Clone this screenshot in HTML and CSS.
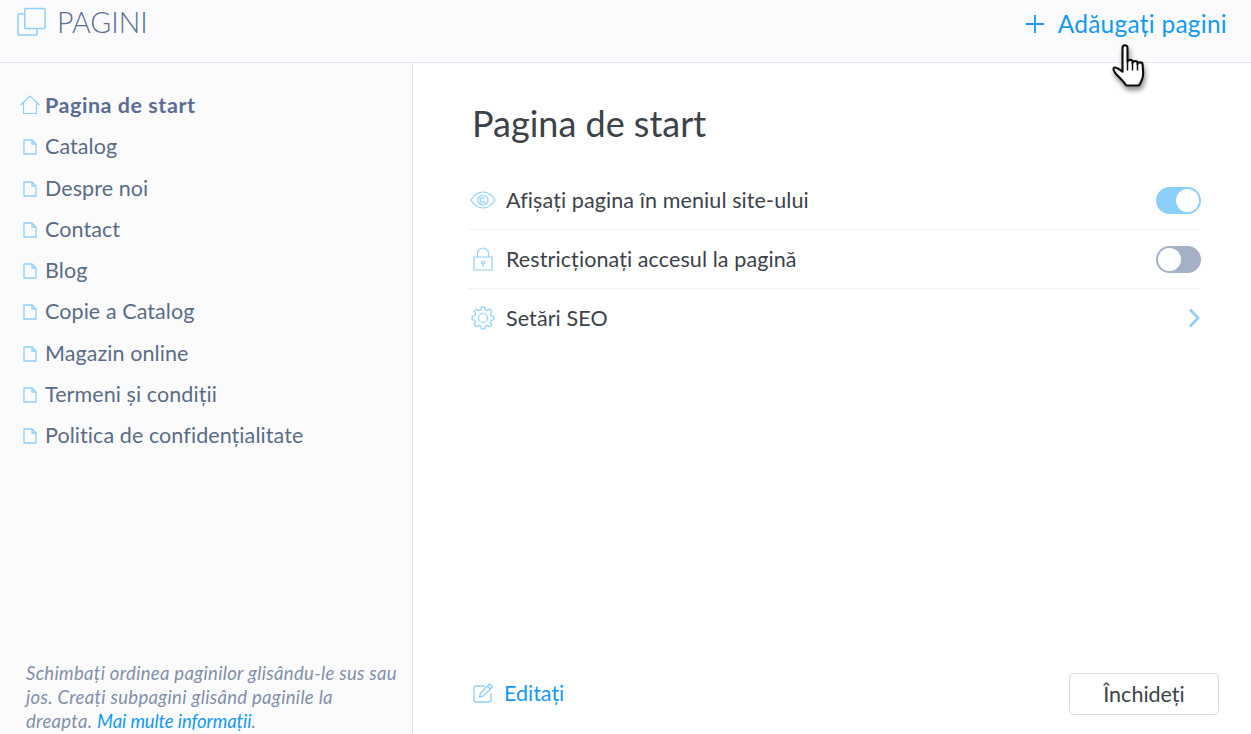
FILE: index.html
```html
<!DOCTYPE html>
<html lang="ro">
<head>
<meta charset="utf-8">
<title>Pagini</title>
<link rel="stylesheet" href="styles.css">
</head>
<body>
<div class="app">
  <header class="topbar">
    <div class="brand">
      <svg class="brand-icon" width="30" height="30" viewBox="0 0 30 30" fill="none" stroke="#8fd0fb" stroke-width="1.500"><rect x="7.700" y="1.500" width="20.300" height="20" rx="1"/><path d="M7.700 7H2a1 1 0 0 0-1 1v19a1 1 0 0 0 1 1h17a1 1 0 0 0 1-1v-5.500"/></svg>
      <span class="brand-title">PAGINI</span>
    </div>
    <a class="add-link">
      <svg width="20" height="20" viewBox="0 0 20 20" stroke="#1399f5" stroke-width="1.800" fill="none"><path d="M10 1v18M1 10h18"/></svg>
      <span>Adăugați pagini</span>
    </a>
  </header>
  <div class="body">
    <aside class="sidebar">
      <ul class="page-list">
        <li class="page-item active"><svg class="pg-icon" width="20" height="20" viewBox="0 0 20 20" fill="none" stroke="#8fd0fb" stroke-width="1.200"><path d="M.5 10 10 1l9.500 9M3.500 8v10.500h13V8"/></svg><span>Pagina de start</span></li>
        <li class="page-item"><svg class="pg-icon doc" width="14" height="16" viewBox="0 0 14 16" fill="none" stroke="#8fd0fb" stroke-width="1.300"><path d="M1 1h8l4 4v10H1zM9 1v4h4"/></svg><span>Catalog</span></li>
        <li class="page-item"><svg class="pg-icon doc" width="14" height="16" viewBox="0 0 14 16" fill="none" stroke="#8fd0fb" stroke-width="1.300"><path d="M1 1h8l4 4v10H1zM9 1v4h4"/></svg><span>Despre noi</span></li>
        <li class="page-item"><svg class="pg-icon doc" width="14" height="16" viewBox="0 0 14 16" fill="none" stroke="#8fd0fb" stroke-width="1.300"><path d="M1 1h8l4 4v10H1zM9 1v4h4"/></svg><span>Contact</span></li>
        <li class="page-item"><svg class="pg-icon doc" width="14" height="16" viewBox="0 0 14 16" fill="none" stroke="#8fd0fb" stroke-width="1.300"><path d="M1 1h8l4 4v10H1zM9 1v4h4"/></svg><span>Blog</span></li>
        <li class="page-item"><svg class="pg-icon doc" width="14" height="16" viewBox="0 0 14 16" fill="none" stroke="#8fd0fb" stroke-width="1.300"><path d="M1 1h8l4 4v10H1zM9 1v4h4"/></svg><span>Copie a Catalog</span></li>
        <li class="page-item"><svg class="pg-icon doc" width="14" height="16" viewBox="0 0 14 16" fill="none" stroke="#8fd0fb" stroke-width="1.300"><path d="M1 1h8l4 4v10H1zM9 1v4h4"/></svg><span>Magazin online</span></li>
        <li class="page-item"><svg class="pg-icon doc" width="14" height="16" viewBox="0 0 14 16" fill="none" stroke="#8fd0fb" stroke-width="1.300"><path d="M1 1h8l4 4v10H1zM9 1v4h4"/></svg><span>Termeni și condiții</span></li>
        <li class="page-item"><svg class="pg-icon doc" width="14" height="16" viewBox="0 0 14 16" fill="none" stroke="#8fd0fb" stroke-width="1.300"><path d="M1 1h8l4 4v10H1zM9 1v4h4"/></svg><span>Politica de confidențialitate</span></li>
      </ul>
      <p class="hint">Schimbați ordinea paginilor glisându-le sus sau jos. Creați subpagini glisând paginile la dreapta. <a class="hint-link">Mai multe informații</a>.</p>
    </aside>
    <main class="main">
      <h1 class="title">Pagina de start</h1>
      <div class="settings">
        <div class="row">
          <svg class="row-icon" width="26" height="18" viewBox="0 0 26 18" fill="none" stroke="#8fd0fb" stroke-width="1.200"><path d="M1 9c3-5 7-8 12-8s9 3 12 8c-3 5-7 8-12 8S4 14 1 9z"/><circle cx="13" cy="9" r="5"/><path d="M15 7.500a2.600 2.600 0 1 0 .3 2.500"/></svg>
          <span class="row-label">Afișați pagina în meniul site-ului</span>
          <span class="switch on"><span class="knob"></span></span>
        </div>
        <div class="row">
          <svg class="row-icon" width="26" height="24" viewBox="0 0 26 24" fill="none" stroke="#8fd0fb" stroke-width="1.200"><path d="M4 10h18v13H4zM7.500 10V6.500a5.500 5.500 0 0 1 11 0V10"/><circle cx="13" cy="15.500" r="1.500"/><path d="M13 17v3"/></svg>
          <span class="row-label">Restricționați accesul la pagină</span>
          <span class="switch"><span class="knob"></span></span>
        </div>
        <div class="row">
          <svg class="row-icon" width="26" height="24" viewBox="-1 0 26 24" fill="none" stroke="#8fd0fb" stroke-width="1.200" stroke-linejoin="round"><circle cx="12" cy="12" r="4.500"/><path d="M13.720 1.140 14.200 3.790 16.250 4.640 18.470 3.100 20.900 5.530 19.360 7.750 20.210 9.800 22.860 10.280V13.720L20.210 14.200 19.360 16.250 20.900 18.470 18.470 20.900 16.250 19.360 14.200 20.210 13.720 22.860H10.280L9.800 20.210 7.750 19.360 5.530 20.900 3.100 18.470 4.640 16.250 3.790 14.200 1.140 13.720V10.280L3.790 9.800 4.640 7.750 3.100 5.530 5.530 3.100 7.750 4.640 9.800 3.790 10.280 1.140z"/></svg>
          <span class="row-label">Setări SEO</span>
          <svg class="chevron" width="12" height="20" viewBox="0 0 12 20" fill="none" stroke="#8fd0fb" stroke-width="2.800"><path d="M2 1.500 10 10l-8 8.500"/></svg>
        </div>
      </div>
      <footer class="actions">
        <a class="edit-link">
          <svg width="22" height="20" viewBox="0 0 22 20" fill="none" stroke="#8fd0fb" stroke-width="1.300"><path d="M12 3H3a2 2 0 0 0-2 2v12a2 2 0 0 0 2 2h13a2 2 0 0 0 2-2v-7"/><path d="M6.500 14l1-4L16.500 1l3 3-9 9zM14.500 3l3 3"/></svg>
          <span>Editați</span>
        </a>
        <button class="close-btn">Închideți</button>
      </footer>
    </main>
  </div>
  <svg class="cursor" width="45" height="55" viewBox="0 0 36 44"><defs><filter id="cursor-shadow" x="-30%" y="-30%" width="170%" height="170%"><feDropShadow dx="1" dy="3" stdDeviation="2.200" flood-color="#000" flood-opacity=".45"/></filter></defs><path filter="url(#cursor-shadow)" d="M10 4c0-3 4-3 4 0v11c0-2 4-2 4 0v1c0-2 4-2 4 0v1c0-2 4-2 4 0 0 0 1 8 0 11-1 3-2 5-3 6H13c-2-3-4-5-7-8-2-2-4-4-3-6 1-1 3 0 7 3z" fill="#fff" stroke="#111" stroke-width="1.700" stroke-linejoin="round"/><path d="M14 15v7M18 16v6M22 17v5" stroke="#111" stroke-width="1.200" fill="none"/></svg>
</div>
</body>
</html>
```
FILE: styles.css
```css
* { box-sizing: border-box; }
html, body { margin: 0; height: 100%; overflow: hidden; }
body { font-family: "Lato", "Open Sans", sans-serif; background: #fff; }
.app { position: relative; width: 1251px; height: 734px; display: flex; flex-direction: column; overflow: hidden; }
.topbar { height: 63px; flex: none; display: flex; justify-content: space-between; align-items: flex-start; background: #fbfbfd; border-bottom: 1px solid #dfe7f0; }
.brand { display: flex; align-items: center; padding: 7px 0 0 17px; gap: 10px; }
.brand-title { font-size: 28.500px; font-weight: 300; color: #5a6c91; line-height: 30px; }
.add-link { display: flex; align-items: center; gap: 13px; padding: 14px 24px 0 0; color: #1399f5; font-size: 24.500px; letter-spacing: .25px; line-height: 20px; }
.body { flex: 1; display: flex; min-height: 0; }
.sidebar { width: 413px; flex: none; background: #fbfbfc; border-right: 1px solid #dfe7f0; display: flex; flex-direction: column; justify-content: space-between; padding-top: 21.500px; }
.page-list { list-style: none; margin: 0; padding: 0 0 0 20px; }
.page-item { height: 41.250px; display: flex; align-items: center; color: #5a6c85; font-size: 21.500px; letter-spacing: .08px; }
.pg-icon { flex: none; margin-right: 5px; }
.pg-icon.doc { margin: 2px 8px 0 3px; }
.active { font-weight: 700; color: #5a6c91; letter-spacing: .55px; }
.hint { margin: 0; padding: 0 12px 0 26px; font-size: 18.500px; letter-spacing: .31px; line-height: 24px; font-style: italic; color: #838fa8; height: 73px; }
.hint-link { color: #1399f5; letter-spacing: -.1px; }
.main { flex: 1; display: flex; flex-direction: column; padding: 0 32px 19px 55px; }
.title { margin: 39px 0 0 4px; font-size: 36px; line-height: 42px; font-weight: 400; color: #3c4249; }
.settings { margin: 27px 19px 0 0; flex: 1; }
.row { height: 59px; display: flex; align-items: center; border-bottom: 1px solid #f0f1f3; }
.row:last-child { border-bottom-color: transparent; }
.row-icon { flex: none; margin: 0 10px 0 2px; }
.row-label { flex: 1; color: #3c4249; font-size: 21.500px; letter-spacing: .1px; }
.switch { width: 45px; height: 27px; margin-right: -1px; border-radius: 14px; background: #a4b0c3; display: flex; align-items: center; padding: 0 2px; }
.switch.on { background: #8ccffb; justify-content: flex-end; }
.knob { width: 23px; height: 23px; border-radius: 50%; background: #fff; }
.actions { display: flex; justify-content: space-between; align-items: center; padding-left: 5px; }
.edit-link { display: flex; align-items: center; gap: 9px; padding-bottom: 3px; color: #1399f5; font-size: 21.500px; }
.close-btn { width: 150px; height: 42px; font: inherit; font-size: 21.500px; color: #3c4249; background: #fff; border: 1px solid #d8dce2; border-radius: 5px; }
.cursor { position: absolute; left: 1110px; top: 43px; }
```
